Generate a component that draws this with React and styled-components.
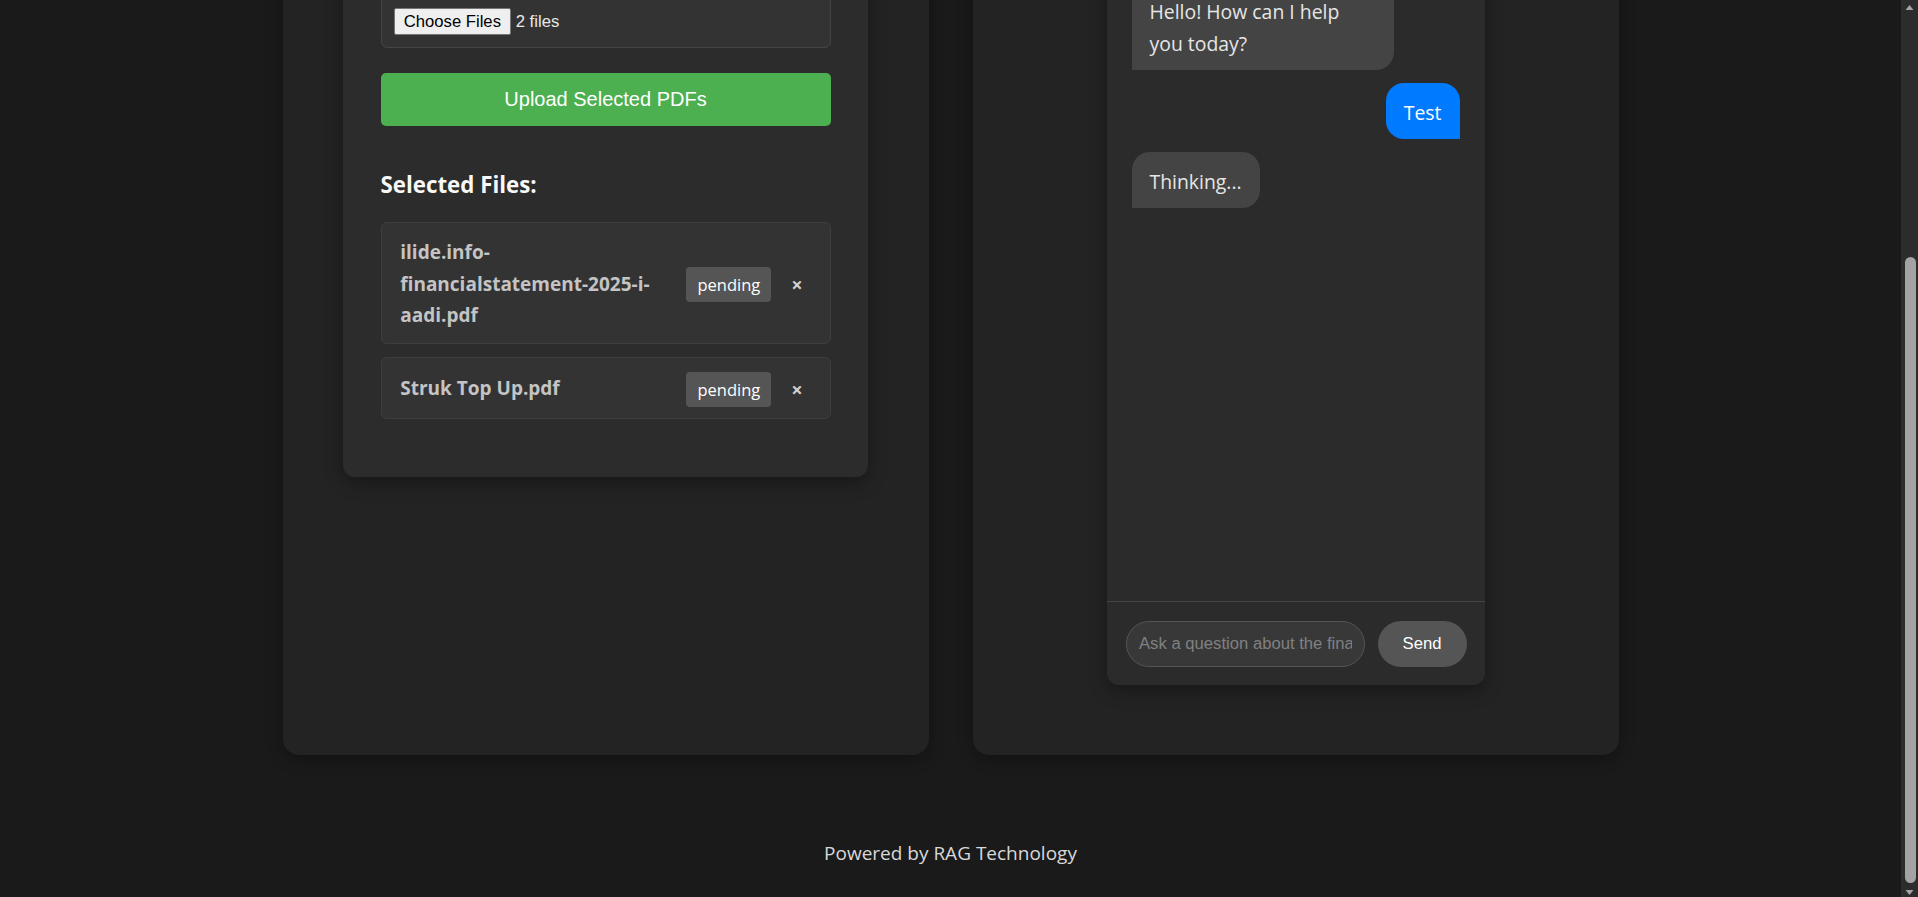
import React, { useLayoutEffect, useEffect } from 'react';
import styled, { createGlobalStyle } from 'styled-components';

const GlobalStyle = createGlobalStyle`
  * { box-sizing: border-box; }
  html { background: #1a1a1a; }
  body {
    margin: 0 17px 0 0;
    background: #1a1a1a;
    color: #e0e0e0;
    font-family: "Open Sans", "Noto Sans", sans-serif;
    font-size: 19px;
    line-height: 32px;
  }
`;

const Page = styled.div`
  padding-top: 25px;
`;

const Header = styled.header`
  text-align: center;
  margin-bottom: 47px;
`;

const Title = styled.h1`
  margin: 0 0 10px;
  font-size: 38px;
  line-height: 48px;
  color: #ffffff;
`;

const Subtitle = styled.p`
  margin: 0;
  color: #aaaaaa;
`;

const Main = styled.main`
  max-width: 1336px;
  margin: 0 auto;
  display: grid;
  grid-template-columns: 1fr 1fr;
  gap: 44px;
`;

const Panel = styled.section`
  background: #232323;
  border-radius: 16px;
  box-shadow: 0 4px 16px rgba(0, 0, 0, 0.3);
  padding: 30px 0 70px;
  display: flex;
  flex-direction: column;
  align-items: center;
`;

const PanelTitle = styled.h2`
  margin: 0 0 26px;
  font-size: 27px;
  line-height: 32px;
  color: #ffffff;
`;

const UploadCard = styled.div`
  width: 525px;
  background: #2c2c2c;
  border-radius: 12px;
  padding: 37.5px;
  box-shadow: 0 5px 18px rgba(0, 0, 0, 0.35);
`;

const CardTitle = styled.h3`
  margin: 0 0 19px;
  font-size: 22px;
  line-height: 37.5px;
  color: #ffffff;
`;

const FileBox = styled.div`
  display: flex;
  align-items: center;
  height: 53px;
  padding: 0 12.5px;
  border: 1.25px solid #444444;
  border-radius: 6px;
  background: #333333;
`;

const ChooseButton = styled.button`
  height: 27px;
  padding: 0 8.75px;
  margin: 0 5px 0 0;
  border: 1px solid #767676;
  border-radius: 2px;
  background: #efefef;
  color: #000000;
  font-family: "Liberation Sans", Arial, sans-serif;
  font-size: 16.67px;
  line-height: 25px;
`;

const FileCount = styled.span`
  font-family: "Liberation Sans", Arial, sans-serif;
  font-size: 16.67px;
  color: #e8e8e8;
`;

const UploadButton = styled.button`
  display: block;
  width: 100%;
  height: 53px;
  margin-top: 25px;
  border: none;
  border-radius: 5px;
  background: #4caf50;
  color: #ffffff;
  font-family: "Liberation Sans", Arial, sans-serif;
  font-size: 20px;
`;

const SectionHeading = styled.h3`
  margin: 39.5px 0 19.5px;
  font-size: 22.3px;
  line-height: 37px;
  font-weight: 700;
  color: #f8f8f8;
`;

const FileList = styled.ul`
  list-style: none;
  margin: 0 0 20px;
  padding: 0;
`;

const FileItem = styled.li`
  display: flex;
  align-items: center;
  padding: 14px 20.8px 11.5px 18.75px;
  margin-bottom: 12.5px;
  border: 1.25px solid #3e3e3e;
  border-radius: 6px;
  background: #333333;
`;

const FileName = styled.span`
  flex: 1;
  min-width: 0;
  font-weight: 700;
  color: #c4c4c4;
  line-height: 31.5px;
`;

const StatusBadge = styled.span`
  margin-left: 15px;
  padding: 5px 11px;
  border-radius: 4px;
  background: #555555;
  color: #ffffff;
  font-size: 16.5px;
  line-height: 25px;
`;

const RemoveButton = styled.button`
  margin-left: 14px;
  padding: 0 6px;
  border: none;
  background: none;
  color: #d0d0d0;
  font-family: "Open Sans", sans-serif;
  font-size: 20px;
  font-weight: 700;
  line-height: 25px;
`;

const ChatCard = styled.div`
  width: 378px;
  background: #2b2b2b;
  border-radius: 12px;
  box-shadow: 0 5px 18px rgba(0, 0, 0, 0.35);
  display: flex;
  flex-direction: column;
  overflow: hidden;
`;

const ChatHeader = styled.div`
  height: 56px;
  padding: 0 19px;
  display: flex;
  align-items: center;
  border-bottom: 1.25px solid #444444;
  font-weight: 700;
  color: #ffffff;
`;

const Messages = styled.div`
  height: 644px;
  padding: 25px;
  display: flex;
  flex-direction: column;
  gap: 12.5px;
  overflow-y: auto;
`;

const Bubble = styled.div`
  max-width: 80%;
  padding: 14px 18px 11px;
  font-size: 19.4px;
  line-height: 31.5px;
  border-radius: 18px;
  align-self: ${(p) => (p.$user ? 'flex-end' : 'flex-start')};
  background: ${(p) => (p.$user ? '#007bff' : '#444444')};
  color: ${(p) => (p.$user ? '#ffffff' : '#e6e6e6')};
  ${(p) =>
    p.$user ? 'border-bottom-right-radius: 0;' : 'border-bottom-left-radius: 0;'}
`;

const InputBar = styled.form`
  display: flex;
  gap: 12.5px;
  padding: 19px 18px 18px 19px;
  border-top: 1.25px solid #444444;
`;

const ChatInput = styled.input`
  flex: 1;
  min-width: 0;
  height: 46px;
  padding: 0 12.5px;
  border: 1.25px solid #555555;
  border-radius: 23px;
  background: #383838;
  color: #ffffff;
  font-family: "Liberation Sans", Arial, sans-serif;
  font-size: 16.67px;
  outline: none;
  &::placeholder { color: #808080; }
`;

const SendButton = styled.button`
  height: 46px;
  padding: 0 25px;
  border: none;
  border-radius: 23px;
  background: #555555;
  color: #ffffff;
  font-family: "Liberation Sans", Arial, sans-serif;
  font-size: 16.67px;
  font-weight: 400;
`;

const Footer = styled.footer`
  margin-top: 48px;
  padding: 33.5px 0 28.5px;
  text-align: center;
  color: #d8d8d8;
  line-height: 32px;
`;

/* Browser scrollbar as it appears in the screenshot (page scrolled to the end) */
const ScrollRail = styled.div`
  position: fixed;
  top: 0;
  right: 0;
  bottom: 0;
  width: 17px;
  background: #2c2c2c;
  display: flex;
  flex-direction: column;
`;

const ScrollArrow = styled.svg`
  flex: none;
  display: block;
  width: 17px;
  height: 17px;
`;

const ScrollTrack = styled.div`
  flex: 1;
  display: flex;
  flex-direction: column;
  align-items: center;
  padding-top: ${(p) => p.$offset}px;
`;

const ScrollThumb = styled.div`
  width: 11px;
  height: ${(p) => p.$length}px;
  margin-left: 1px;
  border-radius: 6px;
  background: #a3a3a3;
`;

const files = [
  { name: 'ilide.info-financialstatement-2025-i-aadi.pdf', status: 'pending' },
  { name: 'Struk Top Up.pdf', status: 'pending' },
];

const messages = [
  { user: false, text: 'Hello! How can I help you today?' },
  { user: true, text: 'Test' },
  { user: false, text: 'Thinking...' },
];

export default function App() {
  useLayoutEffect(() => {
    window.scrollTo(0, document.documentElement.scrollHeight);
  }, []);
  useEffect(() => {
    const id = requestAnimationFrame(() =>
      window.scrollTo(0, document.documentElement.scrollHeight)
    );
    return () => cancelAnimationFrame(id);
  }, []);

  return (
    <>
      <GlobalStyle />
      <Page>
        <Header>
          <Title>Financial Statement Assistant</Title>
          <Subtitle>Upload your PDF reports and ask questions about them</Subtitle>
        </Header>
        <Main>
          <Panel>
            <PanelTitle>Documents</PanelTitle>
            <UploadCard>
              <CardTitle>Upload PDF Files</CardTitle>
              <FileBox>
                <ChooseButton type="button">Choose Files</ChooseButton>
                <FileCount>2 files</FileCount>
              </FileBox>
              <UploadButton type="button">Upload Selected PDFs</UploadButton>
              <SectionHeading>Selected Files:</SectionHeading>
              <FileList>
                {files.map((f) => (
                  <FileItem key={f.name}>
                    <FileName>{f.name}</FileName>
                    <StatusBadge>{f.status}</StatusBadge>
                    <RemoveButton type="button">×</RemoveButton>
                  </FileItem>
                ))}
              </FileList>
            </UploadCard>
          </Panel>
          <Panel>
            <PanelTitle>Chat</PanelTitle>
            <ChatCard>
              <ChatHeader>Financial Assistant</ChatHeader>
              <Messages>
                {messages.map((m, i) => (
                  <Bubble key={i} $user={m.user}>
                    {m.text}
                  </Bubble>
                ))}
              </Messages>
              <InputBar onSubmit={(e) => e.preventDefault()}>
                <ChatInput placeholder="Ask a question about the financial statements..." />
                <SendButton type="submit">Send</SendButton>
              </InputBar>
            </ChatCard>
          </Panel>
        </Main>
        <Footer>Powered by RAG Technology</Footer>
      </Page>
      <ScrollRail aria-hidden="true">
        <ScrollArrow viewBox="0 0 17 17">
          <polygon points="4.5,10 8.5,5 12.5,10" fill="#a3a3a3" />
        </ScrollArrow>
        <ScrollTrack $offset={240}>
          <ScrollThumb $length={626} />
        </ScrollTrack>
        <ScrollArrow viewBox="0 0 17 17">
          <polygon points="4.5,7 8.5,12 12.5,7" fill="#a3a3a3" />
        </ScrollArrow>
      </ScrollRail>
    </>
  );
}
